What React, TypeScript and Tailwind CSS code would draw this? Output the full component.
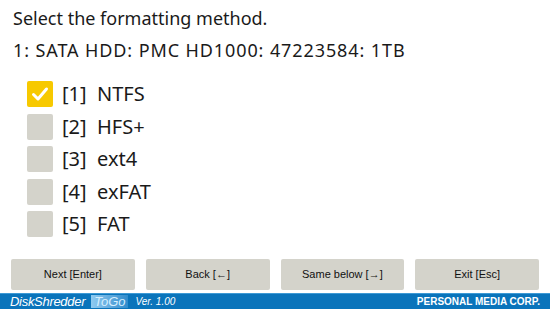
import React from 'react';

const options = [
  { key: '1', label: 'NTFS', checked: true },
  { key: '2', label: 'HFS+', checked: false },
  { key: '3', label: 'ext4', checked: false },
  { key: '4', label: 'exFAT', checked: false },
  { key: '5', label: 'FAT', checked: false },
];

const buttons = ['Next [Enter]', 'Back [\u2190]', 'Same below [\u2192]', 'Exit [Esc]'];

const CheckBox: React.FC<{ checked: boolean }> = ({ checked }) => (
  <div
    className={
      checked
        ? 'w-[26px] h-[26px] rounded-[2px] bg-[#f7c900] flex items-center justify-center'
        : 'w-[26px] h-[26px] rounded-[2px] bg-[#d4d3cb]'
    }
  >
    {checked && (
      <svg width="20" height="20" viewBox="0 0 20 20">
        <path d="M3.5 10.5 L8 15 L16.5 5" fill="none" stroke="#fff" strokeWidth="3" strokeLinecap="round" strokeLinejoin="round" />
      </svg>
    )}
  </div>
);

export default function App() {
  return (
    <div className="w-[550px] h-[309px] bg-white flex flex-col font-['Noto_Sans',sans-serif] text-[#1a1a1a] overflow-hidden">
      <div className="flex-1 flex flex-col px-[13px]">
        <div className="text-[18px] leading-[22px] mt-[7px]">Select the formatting method.</div>
        <div className="text-[18px] leading-[22px] mt-[10px] tracking-[0.9px]">1: SATA HDD: PMC HD1000: 47223584: 1TB</div>
        <div className="flex flex-col gap-[6.5px] mt-[20px] pl-[14px]">
          {options.map((o) => (
            <div key={o.key} className="flex items-center h-[26px]">
              <CheckBox checked={o.checked} />
              <span className="ml-[9px] text-[20px] leading-[26px] whitespace-pre">[{o.key}]  {o.label}</span>
            </div>
          ))}
        </div>
      </div>
      <div className="flex gap-[11px] px-[11px] pb-[3px]">
        {buttons.map((b) => (
          <div
            key={b}
            className="w-[124px] h-[31px] rounded-[2px] bg-[#d4d3cb] flex items-center justify-center text-[11px] text-[#111] font-['Liberation_Sans',sans-serif]"
          >
            {b}
          </div>
        ))}
      </div>
      <div className="h-[16px] bg-[#0a74bb] border-t border-[#3d9ad6] flex items-center px-[10px] text-white font-['Liberation_Sans',sans-serif]">
        <span className="italic text-[13px] leading-[15px] tracking-[-0.3px]">DiskShredder</span>
        <span className="italic text-[13px] leading-[13px] ml-[6px] px-[3px] bg-gradient-to-r from-[#8fcaf0] to-[#2f8ccc] text-[#d6efff]">ToGo</span>
        <span className="italic text-[10px] ml-[7px]">Ver. 1.00</span>
        <span className="ml-auto font-bold text-[10px]">PERSONAL MEDIA CORP.</span>
      </div>
    </div>
  );
}
